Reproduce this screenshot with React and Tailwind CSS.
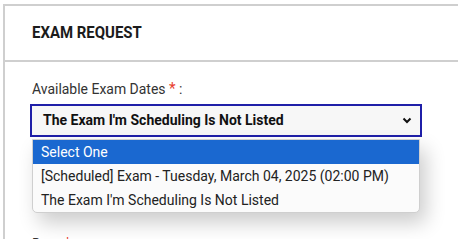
import React from 'react';

const options = [
    'Select One',
    '[Scheduled] Exam - Tuesday, March 04, 2025 (02:00 PM)',
    "The Exam I'm Scheduling Is Not Listed",
];

export default function App() {
    return (
        <div className="w-[458px] h-[239px] overflow-hidden bg-white pt-[4px] pl-[3px] font-['Roboto',sans-serif] text-[#222]">
            <div className="w-[480px] h-[300px] border-l-2 border-t-2 border-[#cfcfcf]">
                {/* Header */}
                <div className="h-[56px] border-b-2 border-[#cfcfcf] flex items-center pl-[27px]">
                    <h1 className="inline-block origin-left scale-x-[0.88] text-[17px] font-bold text-[#1b1b1b] whitespace-nowrap">
                        EXAM REQUEST
                    </h1>
                </div>

                {/* Body */}
                <div className="pl-[25px] pt-[16px]">
                    <label className="block pl-[2px] leading-[20px] text-[15.5px] text-[#333] whitespace-nowrap">
                        <span className="inline-block origin-left scale-x-[0.9]">
                            Available Exam Dates <span className="text-[#e8412f] text-[17px]">*</span> :
                        </span>
                    </label>

                    <div className="relative mt-[5px] w-[392px]">
                        <div className="h-[33px] border-2 border-[#1f1fa8] bg-[#f7f7f7] flex items-center justify-between pl-[11px] pr-[8px]">
                            <span className="text-[14px] font-bold text-[#111]">The Exam I'm Scheduling Is Not Listed</span>
                            <svg width="10" height="7" viewBox="0 0 10 7" fill="none">
                                <path d="M1.5 1.5 L5 5 L8.5 1.5" stroke="#111" strokeWidth="2" />
                            </svg>
                        </div>

                        {/* Open dropdown menu */}
                        <div className="absolute left-[2px] top-[35px] w-[388px] bg-[#fbfbfb] border border-[#cfcfcf] rounded-b-[5px] shadow-[6px_10px_20px_rgba(0,0,0,0.2)] overflow-hidden">
                            {options.map((opt, i) => (
                                <div
                                    key={opt}
                                    className={`h-[24px] flex items-center pl-[8px] text-[14px] ${
                                        i === 0 ? 'bg-[#1a68d0] text-white' : 'text-[#222]'
                                    }`}
                                >
                                    {opt}
                                </div>
                            ))}
                        </div>
                    </div>

                    <label className="block mt-[96px] pl-[2px] leading-[20px] text-[15.5px] text-[#333] whitespace-nowrap">
                        <span className="inline-block origin-left scale-x-[0.9]">
                            Date <span className="text-[#e8412f] text-[17px]">*</span> :
                        </span>
                    </label>
                </div>
            </div>
        </div>
    );
}
